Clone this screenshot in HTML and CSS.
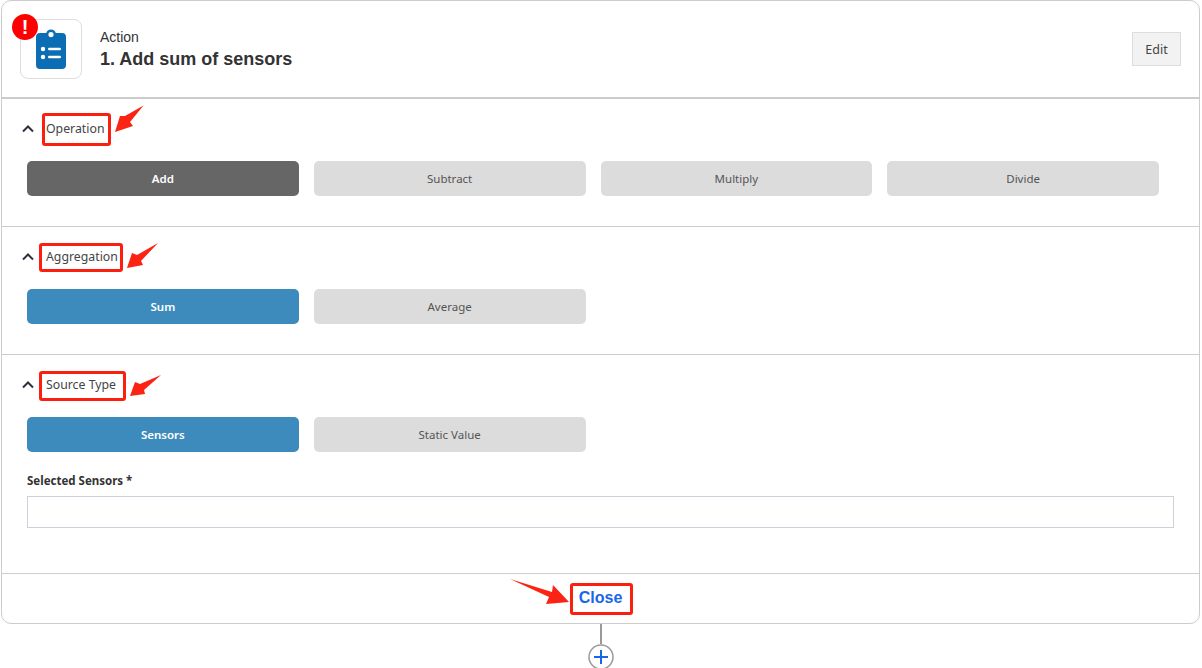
FILE: index.html
```html
<!DOCTYPE html>
<html lang="en">
<head>
<meta charset="utf-8">
<title>Action</title>
<link rel="stylesheet" href="styles.css">
</head>
<body>
<div class="page">
  <main class="card">
    <header class="head">
      <div class="tile">
        <svg class="clip" width="30" height="40" viewBox="0 0 30 40"><path fill="#0b6db3" fill-rule="evenodd" d="M4 4h6.200a5 5 0 0 1 9.600 0H26a4 4 0 0 1 4 4v28a4 4 0 0 1-4 4H4a4 4 0 0 1-4-4V8a4 4 0 0 1 4-4zM15 3a2.600 2.600 0 1 0 0 5.200a2.600 2.600 0 0 0 0-5.200z"/><circle cx="7" cy="20" r="2.200" fill="#fff"/><circle cx="7" cy="28" r="2.200" fill="#fff"/><rect x="12" y="18.800" width="13" height="2.400" rx="1.200" fill="#fff"/><rect x="12" y="26.800" width="13" height="2.400" rx="1.200" fill="#fff"/></svg>
        <span class="alert">!</span>
      </div>
      <div class="titles">
        <div class="kind">Action</div>
        <h1 class="title">1. Add sum of sensors</h1>
      </div>
      <button class="edit">Edit</button>
    </header>

    <section class="sec sec-op">
      <div class="sec-head">
        <svg class="chev" width="12" height="8" viewBox="0 0 12 8"><path d="M1 6.500 6 1.500l5 5" fill="none" stroke="#2b3440" stroke-width="2"/></svg>
        <span class="sec-name">Operation</span>
      </div>
      <div class="opts">
        <button class="opt dark">Add</button>
        <button class="opt">Subtract</button>
        <button class="opt">Multiply</button>
        <button class="opt">Divide</button>
      </div>
    </section>

    <section class="sec sec-ag">
      <div class="sec-head">
        <svg class="chev" width="12" height="8" viewBox="0 0 12 8"><path d="M1 6.500 6 1.500l5 5" fill="none" stroke="#2b3440" stroke-width="2"/></svg>
        <span class="sec-name">Aggregation</span>
      </div>
      <div class="opts">
        <button class="opt blue">Sum</button>
        <button class="opt">Average</button>
      </div>
    </section>

    <section class="sec sec-src">
      <div class="sec-head">
        <svg class="chev" width="12" height="8" viewBox="0 0 12 8"><path d="M1 6.500 6 1.500l5 5" fill="none" stroke="#2b3440" stroke-width="2"/></svg>
        <span class="sec-name">Source Type</span>
      </div>
      <div class="opts">
        <button class="opt blue">Sensors</button>
        <button class="opt">Static Value</button>
      </div>
      <label class="field-label">Selected Sensors *</label>
      <div class="field"></div>
    </section>

    <footer class="foot">
      <button class="close">Close</button>
    </footer>
  </main>

  <div class="connector">
    <span class="line"></span>
    <svg class="plus" width="26" height="26" viewBox="0 0 26 26"><circle cx="13" cy="13" r="12" fill="#fff" stroke="#9a9a9a" stroke-width="1.500"/><path d="M6 13h14M13 6v14" stroke="#1a66e8" stroke-width="2" fill="none"/></svg>
  </div>

  <span class="mark mark-op"></span>
  <span class="mark mark-ag"></span>
  <span class="mark mark-src"></span>
  <span class="mark mark-close"></span>
  <svg class="arrow arrow-op" width="32" height="30" viewBox="0 0 32 30"><path fill="#fb2314" d="M30.500.500 12 11l-5 0-5 16 18-6-3-4z"/></svg>
  <svg class="arrow arrow-ag" width="34" height="28" viewBox="0 0 34 28"><path fill="#fb2314" d="M32 0 11 12 6 10 1 25l16-3-2-4z"/></svg>
  <svg class="arrow arrow-src" width="34" height="28" viewBox="0 0 34 28"><path fill="#fb2314" d="M32 1 11 10 6 8 1 22l15-2-1-4z"/></svg>
  <svg class="arrow arrow-close" width="60" height="28" viewBox="0 0 60 28"><path fill="#fb2314" d="M0 1 42 14l1-7 16 17-23 2 3-7z"/></svg>
</div>
</body>
</html>
```

FILE: styles.css
```css
* { box-sizing: border-box; }
html, body { margin: 0; padding: 0; background: #fff; }
body { font-family: "Noto Sans", "Open Sans", sans-serif; color: #333; overflow: hidden; }
.page { position: relative; width: 1202px; height: 668px; overflow: hidden; }
button { font-family: inherit; cursor: pointer; }

.card {
  width: 1199px; height: 624px; margin-left: 1px;
  border: 1px solid #ccc; border-radius: 10px;
  background: #fff; display: flex; flex-direction: column;
}
.head {
  height: 98px; flex: none; display: flex; align-items: center;
  padding: 0 18px 0 18px; border-bottom: 2px solid #ccc;
}
.tile {
  position: relative; width: 62px; height: 60px; margin-top: -1px;
  border: 1px solid #ddd; border-radius: 8px;
  display: flex; align-items: center; justify-content: center;
}
.clip { width: 30px; height: 40px; }
.alert {
  position: absolute; left: -9px; top: -6px; width: 26px; height: 26px;
  border-radius: 50%; background: #fe0000; color: #fff;
  font: 700 20px/26px "Liberation Sans", sans-serif; text-align: center;
}
.titles { margin-left: 18px; flex: 1; margin-top: -1px; }
.kind { font: 14px/18px "Liberation Sans", sans-serif; color: #333; }
.title { margin: 2px 0 0; font: 700 18px/22px "Liberation Sans", sans-serif; color: #333; }
.edit {
  width: 49px; height: 34px; padding: 0;
  background: #f2f2f2; border: 1px solid #ddd; color: #444; font-size: 12.5px;
}

.sec { flex: none; padding: 0 26px 0 25px; border-bottom: 1px solid #ccc; }
.sec-op { height: 128px; }
.sec-ag { height: 128px; }
.sec-src { height: 219px; border-bottom-color: #ccd0d5; }
.sec-head { height: 62px; display: flex; align-items: center; padding-bottom: 2px; }
.chev { margin-left: -5px; margin-right: 12px; width: 12px; height: 8px; flex: none; }
.sec-name { font-size: 12.3px; line-height: 16px; color: #444; }
.opts { display: grid; grid-template-columns: repeat(4, 271.75px); column-gap: 15px; }
.opt {
  height: 35px; padding: 0; border: 0; border-radius: 5px;
  background: #dcdcdc; color: #555; font-size: 11.5px;
}
.opt.dark { background: #666; color: #fff; font-weight: 600; }
.opt.blue { background: #3d8bbd; color: #fff; font-weight: 600; }
.field-label { display: block; margin-top: 20px; font-size: 11.5px; font-weight: 700; line-height: 18px; color: #333; }
.field { width: 1147px; height: 32px; margin-top: 6px; border: 1px solid #ccd0d8; background: #fff; }

.foot { flex: 1; display: flex; align-items: center; justify-content: center; padding-bottom: 2px; }
.close {
  border: 0; background: none; padding: 0; color: #1a66e8;
  font: 700 16px/20px "Liberation Sans", sans-serif;
}

.connector { width: 26px; margin-left: 588px; display: flex; flex-direction: column; align-items: center; }
.line { display: block; width: 2px; height: 20px; background: #999; }
.plus { flex: none; margin-top: 0; }

.mark { position: absolute; border: 3px solid #fb1f0f; border-radius: 3px; }
.mark-op { left: 42px; top: 113px; width: 69px; height: 33px; }
.mark-ag { left: 39px; top: 243px; width: 84px; height: 29px; }
.mark-src { left: 39px; top: 371px; width: 87px; height: 30px; }
.mark-close { left: 570px; top: 583px; width: 63px; height: 32px; }
.arrow { position: absolute; }
.arrow-op { left: 113px; top: 105px; }
.arrow-ag { left: 126px; top: 243px; }
.arrow-src { left: 129px; top: 374px; }
.arrow-close { left: 510px; top: 578px; }
```
